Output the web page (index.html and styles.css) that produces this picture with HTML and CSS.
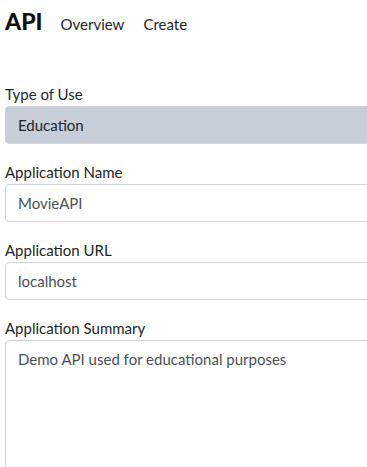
FILE: index.html
```html
<!DOCTYPE html>
<html lang="en">
<head>
    <meta charset="UTF-8">
    <meta name="viewport" content="width=device-width, initial-scale=1.0">
    <title>API - Create</title>
    <link rel="stylesheet" href="styles.css">
</head>
<body>
    <header>
        <h1>API</h1>
        <nav>
            <a href="#">Overview</a>
            <a href="#">Create</a>
        </nav>
    </header>
    <form class="app-form">
        <div class="field">
            <label for="type">Type of Use</label>
            <select id="type" class="control readonly" disabled>
                <option>Education</option>
            </select>
        </div>
        <div class="field">
            <label for="name">Application Name</label>
            <input id="name" class="control" type="text" value="MovieAPI">
        </div>
        <div class="field">
            <label for="url">Application URL</label>
            <input id="url" class="control" type="text" value="localhost">
        </div>
        <div class="field">
            <label for="summary">Application Summary</label>
            <textarea id="summary" class="control summary">Demo API used for educational purposes</textarea>
        </div>
    </form>
</body>
</html>
```

FILE: styles.css
```css
html { overflow: hidden; }
body { margin: 0; padding: 0 5px; background: #fff; color: #212529; font-family: Lato, "Noto Sans", sans-serif; font-size: 15px; }
header { display: flex; align-items: baseline; height: 48px; padding-top: 7px; box-sizing: border-box; }
header h1 { margin: 0; font-size: 23px; font-weight: 900; color: #111; }
nav { display: flex; gap: 19px; margin-left: 18px; }
nav a { color: #212529; text-decoration: none; font-size: 15px; }
.app-form { width: 420px; margin-top: 34px; }
.field { margin-bottom: 16px; }
.field label { display: block; line-height: 24px; }
.control { display: block; width: 100%; box-sizing: border-box; height: 38px; padding: 6px 12px; font: inherit; line-height: 24px; color: #495057; background: #fff; border: 1px solid #ced4da; border-radius: 4px; }
.readonly { background: #c8ced7; color: #212529; appearance: none; -webkit-appearance: none; opacity: 1; }
.summary { height: 160px; resize: none; }
```
